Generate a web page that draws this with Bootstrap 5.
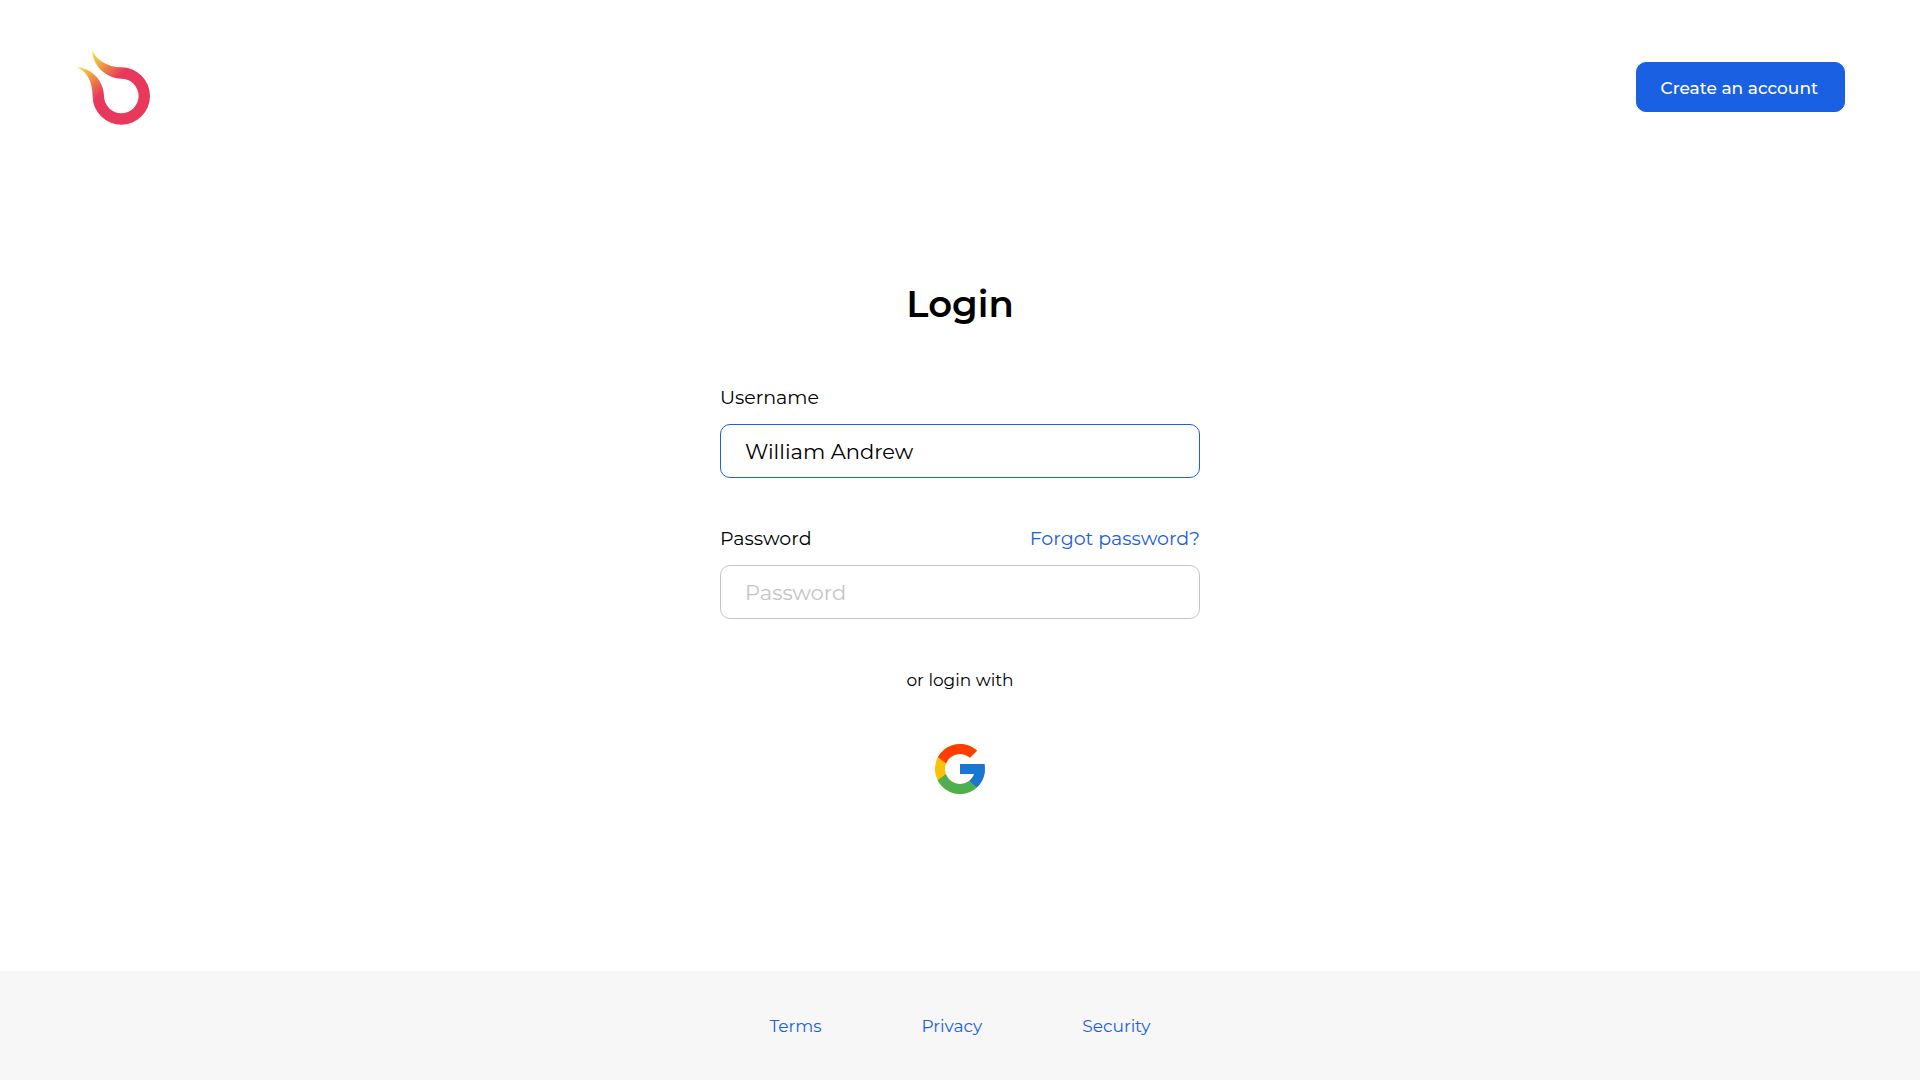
<!DOCTYPE html>
<html lang="en">
<head>
<meta charset="utf-8">
<meta name="viewport" content="width=device-width, initial-scale=1">
<title>Login</title>
<link href="https://cdn.jsdelivr.net/npm/bootstrap@5.3.0/dist/css/bootstrap.min.css" rel="stylesheet">
<style>
  body { font-family: Montserrat, Inter, sans-serif; font-size: 19px; line-height: 24px; color: #000; }
  a { color: #1a60e2; }
  .page-head { padding: 50px 75px 0; }
  .brand-logo { width: 75px; height: 75px; }
  .btn-account { --bs-btn-color: #fff; --bs-btn-bg: #1a60e2; --bs-btn-border-color: #1a60e2; --bs-btn-hover-color: #fff; --bs-btn-hover-bg: #164fbd; --bs-btn-font-size: 17px; --bs-btn-font-weight: 500; --bs-btn-line-height: 24px; --bs-btn-border-radius: 10px; padding: 13px 26px 11px 24px; margin-bottom: 1px; }
  .login-main { padding: 155px 16px 40px; }
  .login-title { font-size: 37px; line-height: 48px; margin-bottom: 58px; }
  .login-form { max-width: 480px; }
  .field-group { margin-bottom: 49px; }
  .field-group label, .field-head { margin-bottom: 14px; }
  .field-head label { margin-bottom: 0; }
  .field-box { height: 54px; padding: 0 24px; font-size: 21px; color: #000; border-radius: 10px; border-color: #c4c4c4; }
  .field-box::placeholder { color: #c4c4c4; }
  .field-active, .field-box:focus { border-color: #1a60e2; box-shadow: none; }
  .alt-text { font-size: 17px; margin-bottom: 47px; }
  .google-logo { width: 60px; height: 60px; }
  .page-foot { background: #f7f7f7; padding: 43px 16px 42px; font-size: 17px; }
  .foot-links { gap: 100px; }
</style>
<script defer src="https://cdn.jsdelivr.net/npm/bootstrap@5.3.0/dist/js/bootstrap.bundle.min.js"></script>
</head>
<body class="d-flex flex-column min-vh-100 bg-white">
<header class="page-head d-flex justify-content-between align-items-center">
  <a href="#" aria-label="Home">
    <svg class="brand-logo d-block" viewBox="0 0 75 75" aria-hidden="true">
      <defs><linearGradient id="flame" gradientUnits="userSpaceOnUse" x1="9" y1="9" x2="35" y2="35"><stop offset="0" stop-color="#f5ec30"/><stop offset=".5" stop-color="#ee9344"/><stop offset="1" stop-color="#e8385b"/></linearGradient></defs>
      <path fill="url(#flame)" d="M17.300 .5C21 9.500 32 17.300 46.300 17.300A28.700 28.700 0 1 1 17.600 46C17.600 33 12 20 .7 17.300C16 17 29 31 29 46A17.300 17.300 0 1 0 46.300 28.700C31 28.700 17.300 15 17.300 .5Z"/>
    </svg>
  </a>
  <button type="button" class="btn btn-account">Create an account</button>
</header>
<main class="login-main flex-grow-1 d-flex flex-column align-items-center">
  <h1 class="login-title fw-semibold">Login</h1>
  <form class="login-form w-100">
    <div class="field-group">
      <label for="username" class="d-block">Username</label>
      <input id="username" type="text" class="form-control field-box field-active" value="William Andrew">
    </div>
    <div class="field-group">
      <div class="field-head d-flex justify-content-between">
        <label for="password">Password</label>
        <a href="#" class="text-decoration-none">Forgot password?</a>
      </div>
      <input id="password" type="password" class="form-control field-box" placeholder="Password">
    </div>
  </form>
  <p class="alt-text">or login with</p>
  <button type="button" class="btn p-0 border-0" aria-label="Login with Google">
    <svg class="google-logo d-block" viewBox="0 0 48 48" aria-hidden="true">
      <path fill="#FFC107" d="M43.611 20.083H42V20H24v8h11.303c-1.649 4.657-6.080 8-11.303 8-6.627 0-12-5.373-12-12s5.373-12 12-12c3.059 0 5.842 1.154 7.961 3.039l5.657-5.657C34.046 6.053 29.268 4 24 4 12.955 4 4 12.955 4 24s8.955 20 20 20 20-8.955 20-20c0-1.341-.138-2.650-.389-3.917z"/>
      <path fill="#FF3D00" d="M6.306 14.691l6.571 4.819C14.655 15.108 18.961 12 24 12c3.059 0 5.842 1.154 7.961 3.039l5.657-5.657C34.046 6.053 29.268 4 24 4 16.318 4 9.656 8.337 6.306 14.691z"/>
      <path fill="#4CAF50" d="M24 44c5.166 0 9.860-1.977 13.409-5.192l-6.190-5.238C29.211 35.091 26.715 36 24 36c-5.202 0-9.619-3.317-11.283-7.946l-6.522 5.025C9.505 39.556 16.227 44 24 44z"/>
      <path fill="#1976D2" d="M43.611 20.083H42V20H24v8h11.303c-.792 2.237-2.231 4.166-4.087 5.571l6.193 5.238C36.971 39.205 44 34 44 24c0-1.341-.138-2.650-.389-3.917z"/>
    </svg>
  </button>
</main>
<footer class="page-foot">
  <nav class="foot-links d-flex justify-content-center" aria-label="Footer">
    <a href="#" class="text-decoration-none">Terms</a>
    <a href="#" class="text-decoration-none">Privacy</a>
    <a href="#" class="text-decoration-none">Security</a>
  </nav>
</footer>
</body>
</html>
